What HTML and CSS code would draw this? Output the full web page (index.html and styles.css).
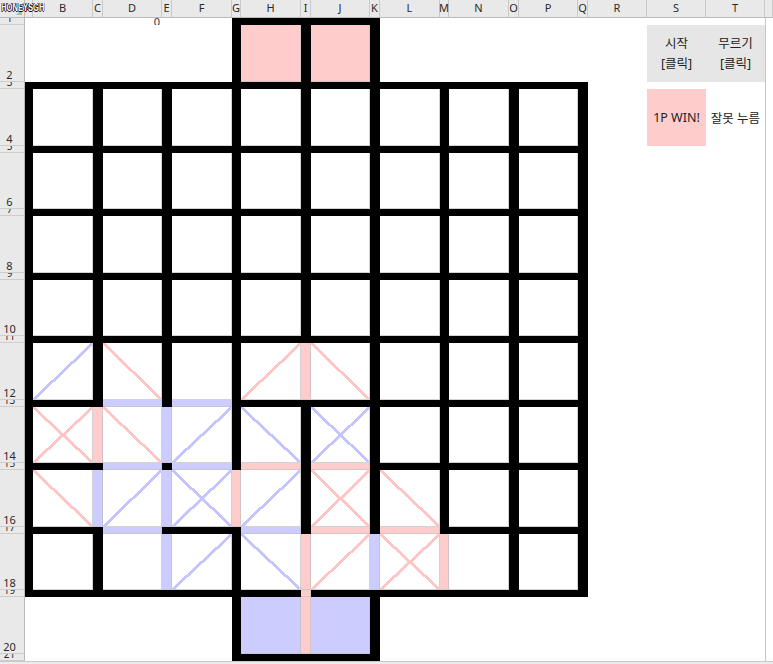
FILE: index.html
```html
<!DOCTYPE html>
<html lang="ko">
<head>
<meta charset="utf-8">
<title>Sheet</title>
<link rel="stylesheet" href="styles.css">
</head>
<body>
<div class="sheet">
  <div class="namebox">HONEYSGH</div>
  <!-- header -->
  <span class="corner"></span><span class="ch">A</span><span class="ch">B</span><span class="ch">C</span><span class="ch">D</span><span class="ch">E</span><span class="ch">F</span><span class="ch">G</span><span class="ch">H</span><span class="ch">I</span><span class="ch">J</span><span class="ch">K</span><span class="ch">L</span><span class="ch">M</span><span class="ch">N</span><span class="ch">O</span><span class="ch">P</span><span class="ch">Q</span><span class="ch">R</span><span class="ch">S</span><span class="ch">T</span><span class="ch"></span>
  <!-- 1 -->
  <span class="rh t">1</span><i class="e"></i><i class="e"></i><i class="e"></i><i class="e num">0</i><i class="e"></i><i class="e"></i><i class="k"></i><i class="k"></i><i class="k"></i><i class="k"></i><i class="k"></i><i class="e"></i><i class="e"></i><i class="e"></i><i class="e"></i><i class="e"></i><i class="e"></i><i class="e"></i><i class="e"></i><i class="e"></i><i class="x"></i>
  <!-- 2 -->
  <span class="rh">2</span><i class="e"></i><i class="e"></i><i class="e"></i><i class="e"></i><i class="e"></i><i class="e"></i><i class="k"></i><i class="p"></i><i class="k"></i><i class="p"></i><i class="k"></i><i class="e"></i><i class="e"></i><i class="e"></i><i class="e"></i><i class="e"></i><i class="e"></i><i class="e"></i><div class="btn">시작<br>[클릭]</div><div class="btn">무르기<br>[클릭]</div><i class="x"></i>
  <!-- 3 -->
  <span class="rh t">3</span><i class="k"></i><i class="k"></i><i class="k"></i><i class="k"></i><i class="k"></i><i class="k"></i><i class="k"></i><i class="k"></i><i class="k"></i><i class="k"></i><i class="k"></i><i class="k"></i><i class="k"></i><i class="k"></i><i class="k"></i><i class="k"></i><i class="k"></i><i class="e"></i><i class="e"></i><i class="e"></i><i class="x"></i>
  <!-- 4 -->
  <span class="rh">4</span><i class="k"></i><i class="c"></i><i class="k"></i><i class="c"></i><i class="k"></i><i class="c"></i><i class="k"></i><i class="c"></i><i class="k"></i><i class="c"></i><i class="k"></i><i class="c"></i><i class="k"></i><i class="c"></i><i class="k"></i><i class="c"></i><i class="k"></i><i class="e"></i><div class="win">1P WIN!</div><div class="msg">잘못 누름</div><i class="x"></i>
  <!-- 5 -->
  <span class="rh t">5</span><i class="k"></i><i class="k"></i><i class="k"></i><i class="k"></i><i class="k"></i><i class="k"></i><i class="k"></i><i class="k"></i><i class="k"></i><i class="k"></i><i class="k"></i><i class="k"></i><i class="k"></i><i class="k"></i><i class="k"></i><i class="k"></i><i class="k"></i><i class="e"></i><i class="e"></i><i class="e"></i><i class="x"></i>
  <!-- 6 -->
  <span class="rh">6</span><i class="k"></i><i class="c"></i><i class="k"></i><i class="c"></i><i class="k"></i><i class="c"></i><i class="k"></i><i class="c"></i><i class="k"></i><i class="c"></i><i class="k"></i><i class="c"></i><i class="k"></i><i class="c"></i><i class="k"></i><i class="c"></i><i class="k"></i><i class="e"></i><i class="e"></i><i class="e"></i><i class="x"></i>
  <!-- 7 -->
  <span class="rh t">7</span><i class="k"></i><i class="k"></i><i class="k"></i><i class="k"></i><i class="k"></i><i class="k"></i><i class="k"></i><i class="k"></i><i class="k"></i><i class="k"></i><i class="k"></i><i class="k"></i><i class="k"></i><i class="k"></i><i class="k"></i><i class="k"></i><i class="k"></i><i class="e"></i><i class="e"></i><i class="e"></i><i class="x"></i>
  <!-- 8 -->
  <span class="rh">8</span><i class="k"></i><i class="c"></i><i class="k"></i><i class="c"></i><i class="k"></i><i class="c"></i><i class="k"></i><i class="c"></i><i class="k"></i><i class="c"></i><i class="k"></i><i class="c"></i><i class="k"></i><i class="c"></i><i class="k"></i><i class="c"></i><i class="k"></i><i class="e"></i><i class="e"></i><i class="e"></i><i class="x"></i>
  <!-- 9 -->
  <span class="rh t">9</span><i class="k"></i><i class="k"></i><i class="k"></i><i class="k"></i><i class="k"></i><i class="k"></i><i class="k"></i><i class="k"></i><i class="k"></i><i class="k"></i><i class="k"></i><i class="k"></i><i class="k"></i><i class="k"></i><i class="k"></i><i class="k"></i><i class="k"></i><i class="e"></i><i class="e"></i><i class="e"></i><i class="x"></i>
  <!-- 10 -->
  <span class="rh">10</span><i class="k"></i><i class="c"></i><i class="k"></i><i class="c"></i><i class="k"></i><i class="c"></i><i class="k"></i><i class="c"></i><i class="k"></i><i class="c"></i><i class="k"></i><i class="c"></i><i class="k"></i><i class="c"></i><i class="k"></i><i class="c"></i><i class="k"></i><i class="e"></i><i class="e"></i><i class="e"></i><i class="x"></i>
  <!-- 11 -->
  <span class="rh t">11</span><i class="k"></i><i class="k"></i><i class="k"></i><i class="k"></i><i class="k"></i><i class="k"></i><i class="k"></i><i class="k"></i><i class="k"></i><i class="k"></i><i class="k"></i><i class="k"></i><i class="k"></i><i class="k"></i><i class="k"></i><i class="k"></i><i class="k"></i><i class="e"></i><i class="e"></i><i class="e"></i><i class="x"></i>
  <!-- 12 -->
  <span class="rh">12</span><i class="k"></i><i class="c uf"></i><i class="k"></i><i class="c pb"></i><i class="k"></i><i class="c"></i><i class="k"></i><i class="c pf"></i><i class="p"></i><i class="c pb"></i><i class="k"></i><i class="c"></i><i class="k"></i><i class="c"></i><i class="k"></i><i class="c"></i><i class="k"></i><i class="e"></i><i class="e"></i><i class="e"></i><i class="x"></i>
  <!-- 13 -->
  <span class="rh t">13</span><i class="k"></i><i class="k"></i><i class="k"></i><i class="u"></i><i class="k"></i><i class="u"></i><i class="k"></i><i class="k"></i><i class="k"></i><i class="k"></i><i class="k"></i><i class="k"></i><i class="k"></i><i class="k"></i><i class="k"></i><i class="k"></i><i class="k"></i><i class="e"></i><i class="e"></i><i class="e"></i><i class="x"></i>
  <!-- 14 -->
  <span class="rh">14</span><i class="k"></i><i class="c px"></i><i class="p"></i><i class="c pb"></i><i class="u"></i><i class="c uf"></i><i class="k"></i><i class="c ub"></i><i class="k"></i><i class="c ux"></i><i class="k"></i><i class="c"></i><i class="k"></i><i class="c"></i><i class="k"></i><i class="c"></i><i class="k"></i><i class="e"></i><i class="e"></i><i class="e"></i><i class="x"></i>
  <!-- 15 -->
  <span class="rh t">15</span><i class="k"></i><i class="k"></i><i class="k"></i><i class="u"></i><i class="k"></i><i class="u"></i><i class="k"></i><i class="p"></i><i class="k"></i><i class="p"></i><i class="k"></i><i class="k"></i><i class="k"></i><i class="k"></i><i class="k"></i><i class="k"></i><i class="k"></i><i class="e"></i><i class="e"></i><i class="e"></i><i class="x"></i>
  <!-- 16 -->
  <span class="rh">16</span><i class="k"></i><i class="c pb"></i><i class="u"></i><i class="c uf"></i><i class="u"></i><i class="c ux"></i><i class="p"></i><i class="c uf"></i><i class="k"></i><i class="c px"></i><i class="k"></i><i class="c pb"></i><i class="k"></i><i class="c"></i><i class="k"></i><i class="c"></i><i class="k"></i><i class="e"></i><i class="e"></i><i class="e"></i><i class="x"></i>
  <!-- 17 -->
  <span class="rh t">17</span><i class="k"></i><i class="k"></i><i class="k"></i><i class="u"></i><i class="k"></i><i class="k"></i><i class="k"></i><i class="u"></i><i class="k"></i><i class="p"></i><i class="k"></i><i class="p"></i><i class="k"></i><i class="k"></i><i class="k"></i><i class="k"></i><i class="k"></i><i class="e"></i><i class="e"></i><i class="e"></i><i class="x"></i>
  <!-- 18 -->
  <span class="rh">18</span><i class="k"></i><i class="c"></i><i class="k"></i><i class="c"></i><i class="u"></i><i class="c uf"></i><i class="k"></i><i class="c ub"></i><i class="p"></i><i class="c pf"></i><i class="u"></i><i class="c px"></i><i class="p"></i><i class="c"></i><i class="k"></i><i class="c"></i><i class="k"></i><i class="e"></i><i class="e"></i><i class="e"></i><i class="x"></i>
  <!-- 19 -->
  <span class="rh t">19</span><i class="k"></i><i class="k"></i><i class="k"></i><i class="k"></i><i class="k"></i><i class="k"></i><i class="k"></i><i class="k"></i><i class="p"></i><i class="k"></i><i class="k"></i><i class="k"></i><i class="k"></i><i class="k"></i><i class="k"></i><i class="k"></i><i class="k"></i><i class="e"></i><i class="e"></i><i class="e"></i><i class="x"></i>
  <!-- 20 -->
  <span class="rh">20</span><i class="e"></i><i class="e"></i><i class="e"></i><i class="e"></i><i class="e"></i><i class="e"></i><i class="k"></i><i class="u"></i><i class="p"></i><i class="u"></i><i class="k"></i><i class="e"></i><i class="e"></i><i class="e"></i><i class="e"></i><i class="e"></i><i class="e"></i><i class="e"></i><i class="e"></i><i class="e"></i><i class="x"></i>
  <!-- 21 -->
  <span class="rh t">21</span><i class="e"></i><i class="e"></i><i class="e"></i><i class="e"></i><i class="e"></i><i class="e"></i><i class="k"></i><i class="k"></i><i class="k"></i><i class="k"></i><i class="k"></i><i class="e"></i><i class="e"></i><i class="e"></i><i class="e"></i><i class="e"></i><i class="e"></i><i class="e"></i><i class="e"></i><i class="e"></i><i class="x"></i>
  <div class="foot"></div>
</div>
</body>
</html>
```
FILE: styles.css
```css
html, body {
  margin: 0;
  padding: 0;
  background: #ffffff;
}
body {
  font-family: "Noto Sans", "Noto Sans CJK KR", sans-serif;
  color: #222;
}
.sheet {
  position: relative;
  width: 773px;
  height: 664px;
  overflow: hidden;
  display: grid;
  grid-template-columns: 25px 8px 60px 10px 59px 10px 60px 9px 60px 10px 59px 10px 60px 9px 60px 10px 59px 10px 59px 59px 59px 8px;
  grid-template-rows: 18px 7px 57px 7px 57px 7px 56px 7px 57px 7px 56px 7px 57px 7px 56px 7px 57px 7px 56px 7px 57px 7px 3px;
}
.sheet > * {
  display: block;
  box-sizing: border-box;
  min-width: 0;
  min-height: 0;
  overflow: hidden;
  font-style: normal;
}

/* headers */
.corner {
  position: relative;
  background: #e9e9e9;
  border-right: 1px solid #b9b9b9;
  border-bottom: 1px solid #b9b9b9;
}
.corner::after {
  content: "";
  position: absolute;
  right: 2px;
  bottom: 2px;
  border-left: 6px solid transparent;
  border-bottom: 6px solid #b3b3b3;
}
.sheet > .ch {
  display: flex;
  align-items: center;
  justify-content: center;
  background: #e9e9e9;
  border-right: 1px solid #c9c9c9;
  border-bottom: 1px solid #b9b9b9;
  font-size: 11px;
  line-height: 12px;
  color: #2a2a2a;
  overflow: visible;
  padding-bottom: 1px;
}
.sheet > .rh {
  display: flex;
  align-items: flex-end;
  justify-content: center;
  padding-right: 5px;
  background: #e9e9e9;
  border-right: 1px solid #b9b9b9;
  border-bottom: 1px solid #cdcdcd;
  font-size: 11px;
  line-height: 13px;
  color: #2a2a2a;
}
.sheet > .rh.t {
  align-items: flex-start;
  line-height: 0;
  font-size: 10px;
}
.namebox {
  position: absolute;
  left: 1px;
  top: 3px;
  font-family: "Liberation Sans", sans-serif;
  font-weight: bold;
  font-size: 10px;
  line-height: 10px;
  color: #ffffff;
  text-shadow: -1px 0 #111, 1px 0 #111, 0 -1px #111, 0 1px #111;
  transform: scaleX(0.76);
  transform-origin: left top;
  white-space: nowrap;
  z-index: 2;
}

/* cells */
.e { background: #ffffff; }
.x { background: #ffffff; border-left: 1px solid #c6c6c6; }
.k { background: #000000; }
.p { background: #ffcccc; box-shadow: inset -1px -1px 0 #d6c4c4; }
.u { background: #ccccff; box-shadow: inset -1px -1px 0 #c4c4d6; }
.c { background-color: #ffffff; box-shadow: inset -1px -1px 0 #d2d2d2; }

.pf, .pb, .px { --d: #ffc4c4; }
.uf, .ub, .ux { --d: #c4c4ff; }
.pf, .uf {
  background-image: linear-gradient(to bottom right, transparent calc(50% - 1.4px), var(--d) calc(50% - 1.4px), var(--d) calc(50% + 1.4px), transparent calc(50% + 1.4px));
}
.pb, .ub {
  background-image: linear-gradient(to top right, transparent calc(50% - 1.4px), var(--d) calc(50% - 1.4px), var(--d) calc(50% + 1.4px), transparent calc(50% + 1.4px));
}
.px, .ux {
  background-image:
    linear-gradient(to bottom right, transparent calc(50% - 1.4px), var(--d) calc(50% - 1.4px), var(--d) calc(50% + 1.4px), transparent calc(50% + 1.4px)),
    linear-gradient(to top right, transparent calc(50% - 1.4px), var(--d) calc(50% - 1.4px), var(--d) calc(50% + 1.4px), transparent calc(50% + 1.4px));
}

.num {
  text-align: right;
  padding-right: 2px;
  font-size: 11px;
  line-height: 7px;
  color: #333;
}

.sheet > .btn, .sheet > .win, .sheet > .msg { display: flex; }
.btn {
  align-items: center;
  justify-content: center;
  text-align: center;
  background: #e6e6e6;
  font-size: 12.5px;
  line-height: 20px;
  color: #222;
}
.win {
  align-items: center;
  justify-content: center;
  background: #ffcccc;
  font-size: 12.5px;
  color: #222;
  white-space: nowrap;
}
.msg {
  align-items: center;
  justify-content: center;
  background: #ffffff;
  font-size: 12.5px;
  color: #222;
  white-space: nowrap;
}
.foot {
  grid-column: 1 / -1;
  background: #ececec;
  border-top: 1px solid #c8c8c8;
}
```
